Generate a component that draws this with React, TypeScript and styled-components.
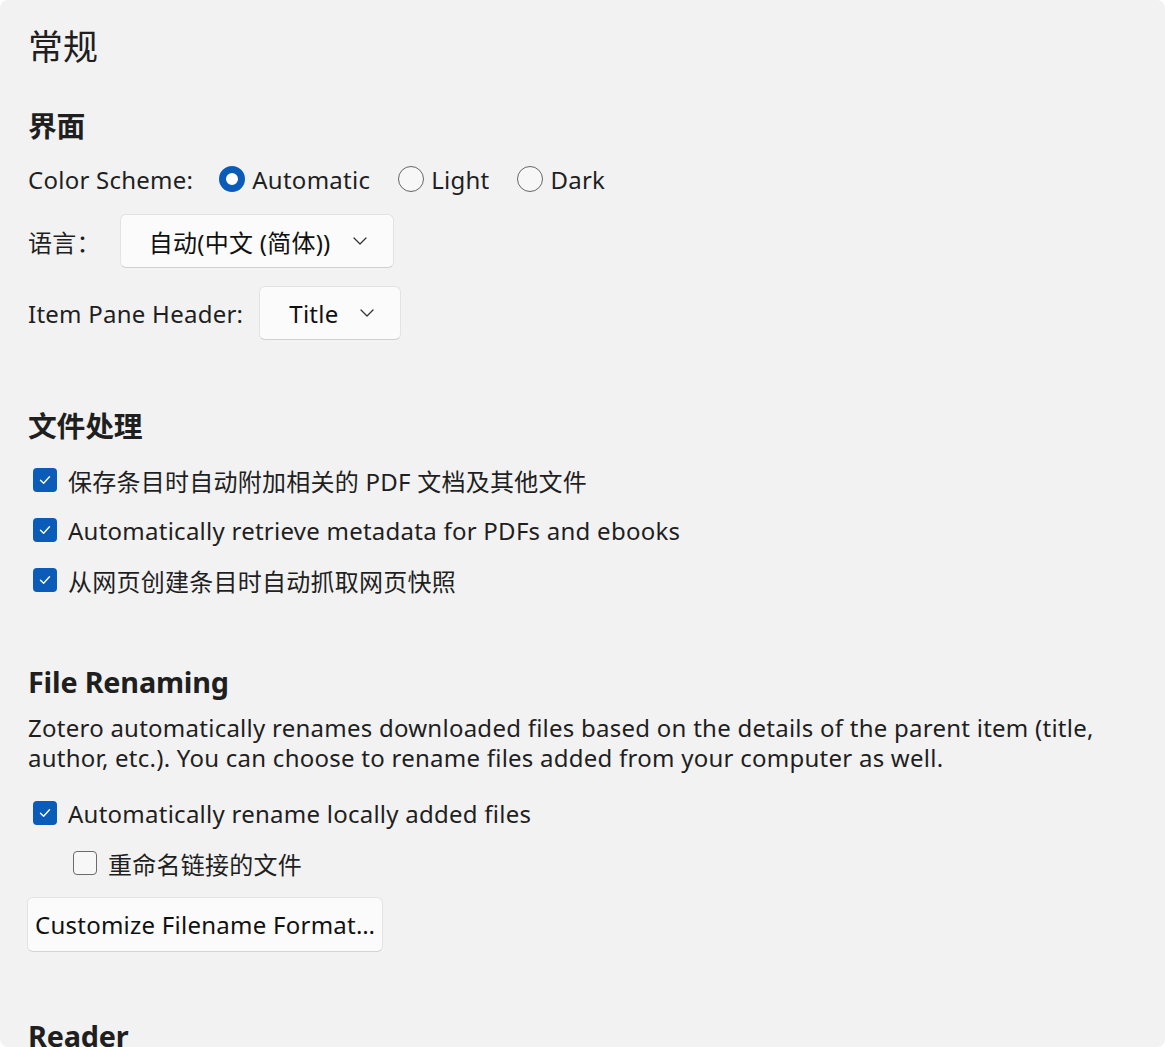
import React from "react";
import styled, { createGlobalStyle } from "styled-components";

const Global = createGlobalStyle`
  html, body { margin: 0; padding: 0; background: #ffffff; }
  body {
    font-family: "Noto Sans", "Noto Sans CJK SC", sans-serif;
    -webkit-font-smoothing: antialiased;
  }
`;

const Window = styled.div`
  width: 1165px;
  height: 1047px;
  box-sizing: border-box;
  background: #f2f2f2;
  border-radius: 8px;
  overflow: hidden;
  padding: 24px 28px 0 28px;
  color: #1f1f1f;
  font-size: 24px;
  letter-spacing: 0.25px;
`;

const PageTitle = styled.h1`
  margin: 0;
  font-size: 35px;
  line-height: 46px;
  font-weight: 400;
  letter-spacing: 0;
  color: #1f1f1f;
`;

const SectionHeading = styled.h2<{ $top: number }>`
  margin: ${(p) => p.$top}px 0 0 0;
  font-size: 28.8px;
  line-height: 40px;
  font-weight: 700;
  letter-spacing: -0.2px;
  color: #1f1f1f;
`;

const Row = styled.div<{ $top: number; $height: number }>`
  display: flex;
  align-items: center;
  height: ${(p) => p.$height}px;
  margin-top: ${(p) => p.$top}px;
`;

const Label = styled.span<{ $gap: number }>`
  margin-right: ${(p) => p.$gap}px;
  white-space: nowrap;
`;

const RadioOption = styled.label`
  display: inline-flex;
  align-items: center;
  gap: 7px;
  margin-right: 28px;
`;

const RadioCircle = styled.span<{ $on?: boolean }>`
  width: 26px;
  height: 26px;
  box-sizing: border-box;
  border-radius: 50%;
  border: ${(p) => (p.$on ? "7px solid #0a5cb8" : "1.5px solid #666666")};
  background: ${(p) => (p.$on ? "#ffffff" : "#f7f7f7")};
`;

const Dropdown = styled.button<{ $pl: number; $pr: number }>`
  display: inline-flex;
  align-items: center;
  height: 54px;
  box-sizing: border-box;
  padding: 0 ${(p) => p.$pr}px 0 ${(p) => p.$pl}px;
  background: #fbfbfb;
  border: 1px solid #e3e3e3;
  border-bottom-color: #d0d0d0;
  border-radius: 6px;
  font: inherit;
  letter-spacing: inherit;
  color: #111111;
  gap: 22px;
`;

const CheckRow = styled.label<{ $indent?: number }>`
  display: flex;
  align-items: center;
  height: 50px;
  gap: 11px;
  padding-left: ${(p) => p.$indent ?? 5}px;
`;

const Box = styled.span<{ $on?: boolean }>`
  width: 24px;
  height: 24px;
  box-sizing: border-box;
  border-radius: 4px;
  display: inline-flex;
  align-items: center;
  justify-content: center;
  background: ${(p) => (p.$on ? "#0a5cb8" : "#f7f7f7")};
  border: ${(p) => (p.$on ? "none" : "1.5px solid #6b6b6b")};
  flex: none;
`;

const Paragraph = styled.p`
  margin: 11px 0 0 0;
  line-height: 30px;
  max-width: 1100px;
`;

const Checks = styled.div<{ $top: number }>`
  margin-top: ${(p) => p.$top}px;
  display: flex;
  flex-direction: column;
`;

const PushButton = styled.button`
  margin-top: 9px;
  margin-left: -1px;
  height: 55px;
  box-sizing: border-box;
  padding: 0 7px;
  background: #fbfbfb;
  border: 1px solid #e3e3e3;
  border-bottom-color: #d4d4d4;
  border-radius: 6px;
  font: inherit;
  letter-spacing: inherit;
  color: #111111;
  display: block;
`;

const Chevron = () => (
  <svg width="14" height="8" viewBox="0 0 14 8" fill="none">
    <path d="M1 1 L7 7 L13 1" stroke="#333" strokeWidth="1.3" strokeLinecap="round" strokeLinejoin="round" />
  </svg>
);

const Tick = () => (
  <svg width="14" height="14" viewBox="0 0 14 14" fill="none">
    <path d="M2.5 7.2 L5.6 10.2 L11.5 3.8" stroke="#ffffff" strokeWidth="1.4" strokeLinecap="round" strokeLinejoin="round" />
  </svg>
);

const Check = ({ on, children, indent }: { on?: boolean; children: React.ReactNode; indent?: number }) => (
  <CheckRow $indent={indent}>
    <Box $on={on}>{on && <Tick />}</Box>
    <span>{children}</span>
  </CheckRow>
);

export default function App() {
  return (
    <>
      <Global />
      <Window>
        <PageTitle>常规</PageTitle>

        <SectionHeading $top={36}>界面</SectionHeading>
        <Row $top={13} $height={40}>
          <Label $gap={26}>Color Scheme:</Label>
          <RadioOption>
            <RadioCircle $on />
            Automatic
          </RadioOption>
          <RadioOption>
            <RadioCircle />
            Light
          </RadioOption>
          <RadioOption>
            <RadioCircle />
            Dark
          </RadioOption>
        </Row>
        <Row $top={15} $height={54}>
          <Label $gap={19}>语言：</Label>
          <Dropdown $pl={28} $pr={26}>
            <span>自动(中文 (简体))</span>
            <Chevron />
          </Dropdown>
        </Row>
        <Row $top={18} $height={54}>
          <Label $gap={16}>Item Pane Header:</Label>
          <Dropdown $pl={29} $pr={26}>
            <span>Title</span>
            <Chevron />
          </Dropdown>
        </Row>

        <SectionHeading $top={66}>文件处理</SectionHeading>
        <Checks $top={9}>
          <Check on>保存条目时自动附加相关的 PDF 文档及其他文件</Check>
          <Check on>Automatically retrieve metadata for PDFs and ebooks</Check>
          <Check on>从网页创建条目时自动抓取网页快照</Check>
        </Checks>

        <SectionHeading $top={57}>File Renaming</SectionHeading>
        <Paragraph>
          Zotero automatically renames downloaded files based on the details of the parent item (title,
          author, etc.). You can choose to rename files added from your computer as well.
        </Paragraph>
        <Checks $top={15}>
          <Check on>Automatically rename locally added files</Check>
          <Check indent={45}>重命名链接的文件</Check>
        </Checks>
        <PushButton>Customize Filename Format…</PushButton>

        <SectionHeading $top={64}>Reader</SectionHeading>
      </Window>
    </>
  );
}
